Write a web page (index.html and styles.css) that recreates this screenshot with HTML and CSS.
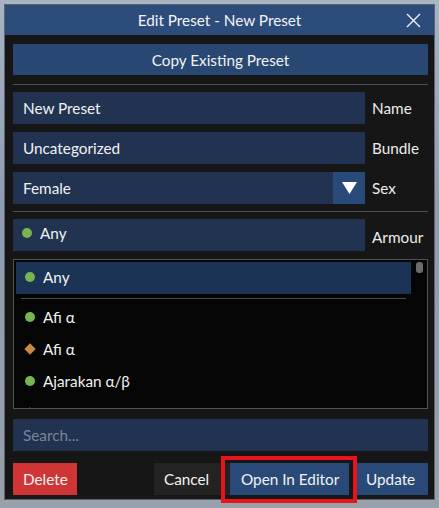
FILE: index.html
```html
<!DOCTYPE html>
<html>
<head>
<meta charset="utf-8">
<link rel="stylesheet" href="styles.css">
</head>
<body>
<div class="dialog">
  <div class="titlebar">
    <span class="title">Edit Preset - New Preset</span>
    <svg class="close" width="15" height="15" viewBox="0 0 15 15"><path d="M1 1 L14 14 M14 1 L1 14" stroke="#f2f2f2" stroke-width="1.4" fill="none"/></svg>
  </div>
  <div class="content">
    <div class="btn-wide">Copy Existing Preset</div>
    <div class="sep sep-top"></div>
    <div class="row">
      <div class="field">New Preset</div>
      <div class="label">Name</div>
    </div>
    <div class="row gap">
      <div class="field">Uncategorized</div>
      <div class="label">Bundle</div>
    </div>
    <div class="row gap">
      <div class="field select">
        <span class="select-text">Female</span>
        <span class="arrow"><svg width="15" height="12" viewBox="0 0 15 12"><polygon points="0,0 15,0 7.5,12" fill="#ffffff"/></svg></span>
      </div>
      <div class="label">Sex</div>
    </div>
    <div class="sep sep-mid"></div>
    <div class="row">
      <div class="field armour"><span class="dot"></span>Any</div>
      <div class="label label-low">Armour</div>
    </div>
    <div class="listbox">
      <div class="list">
        <div class="item selected"><span class="dot"></span>Any</div>
        <div class="list-sep"></div>
        <div class="item"><span class="dot"></span>Afi α</div>
        <div class="item"><span class="diamond"></span>Afi α</div>
        <div class="item"><span class="dot"></span>Ajarakan α/β</div>
        <div class="item"><span class="diamond"></span>Ajarakan α/β</div>
      </div>
      <div class="thumb"></div>
    </div>
    <div class="search">Search...</div>
    <div class="buttons">
      <div class="btn delete">Delete</div>
      <div class="btn cancel">Cancel</div>
      <div class="btn blue open">Open In Editor<span class="highlight"></span></div>
      <div class="btn blue update">Update</div>
    </div>
  </div>
</div>
</body>
</html>
```
FILE: styles.css
```css
html, body {
  margin: 0;
  padding: 0;
}
body {
  width: 439px;
  height: 508px;
  overflow: hidden;
  background: linear-gradient(180deg, #a9b4c2 0%, #8f9db0 40%, #98a0a9 100%);
  font-family: "Lato", "Noto Sans", sans-serif;
  font-size: 15.3px;
  color: #f2f2f2;
  padding: 4px 0 0 4px;
  box-sizing: border-box;
}
.dialog {
  width: 431px;
  border: 1px solid #5b6371;
  background: #161616;
  box-sizing: border-box;
}
.titlebar {
  position: relative;
  height: 30px;
  background: #2c4c7c;
  display: flex;
  align-items: center;
  justify-content: center;
}
.title {
  color: #f4f4f4;
}
.close {
  position: absolute;
  right: 13px;
  top: 8px;
}
.content {
  padding: 9px 6px 4px 8px;
  display: flex;
  flex-direction: column;
}
.btn-wide {
  height: 31px;
  background: #284772;
  display: flex;
  align-items: center;
  justify-content: center;
}
.sep {
  height: 1px;
  background: #4a4c52;
}
.sep-top {
  margin: 9px 0 7px;
}
.sep-mid {
  margin: 7px 0 7px;
}
.row {
  display: flex;
  align-items: center;
  height: 32px;
}
.row.gap {
  margin-top: 8px;
}
.field {
  width: 352px;
  height: 32px;
  box-sizing: border-box;
  background: #213351;
  display: flex;
  align-items: center;
  padding-left: 10px;
}
.label {
  margin-left: 7px;
  color: #ececec;
}
.label-low {
  padding-top: 3px;
}
.select {
  justify-content: space-between;
  padding-right: 0;
}
.arrow {
  width: 32px;
  height: 32px;
  background: #294a78;
  display: flex;
  align-items: center;
  justify-content: center;
}
.armour {
  padding-left: 9px;
  padding-bottom: 4px;
}
.dot {
  display: inline-block;
  width: 10px;
  height: 10px;
  border-radius: 50%;
  background: #78b450;
  margin-right: 8px;
  flex-shrink: 0;
}
.diamond {
  display: inline-block;
  width: 8px;
  height: 8px;
  background: #c98a42;
  transform: rotate(45deg);
  margin-left: 1px;
  margin-right: 9px;
  flex-shrink: 0;
}
.listbox {
  position: relative;
  margin-top: 8px;
  height: 150px;
  box-sizing: border-box;
  border: 1px solid #505257;
  background: #050505;
  padding: 2px;
  overflow: hidden;
}
.list {
  width: 395px;
}
.item {
  height: 32px;
  box-sizing: border-box;
  display: flex;
  align-items: center;
  padding-left: 9px;
  padding-bottom: 3px;
}
.item.selected {
  background: #1b3354;
}
.list-sep {
  height: 1px;
  margin: 4px 5px 3px;
  background: #46484d;
}
.thumb {
  position: absolute;
  left: 402px;
  top: 2px;
  width: 7px;
  height: 11px;
  border-radius: 3px;
  background: #6b6b6b;
}
.search {
  margin-top: 10px;
  height: 32px;
  background: #213351;
  display: flex;
  align-items: center;
  padding-left: 10px;
  color: #7b8394;
}
.buttons {
  margin-top: 12px;
  display: flex;
  height: 32px;
}
.btn {
  height: 32px;
  box-sizing: border-box;
  display: flex;
  align-items: center;
  padding-left: 10px;
}
.delete {
  width: 64px;
  background: #d03535;
}
.cancel {
  margin-left: auto;
  width: 76px;
  background: #232323;
}
.blue {
  background: #294a78;
}
.open {
  position: relative;
  width: 119px;
  padding-left: 11px;
}
.update {
  width: 71px;
  margin-left: 8px;
  padding-left: 9px;
}
.highlight {
  position: absolute;
  left: -9px;
  right: -8px;
  top: -7px;
  bottom: -8px;
  border: 4px solid #e8141c;
}
```
